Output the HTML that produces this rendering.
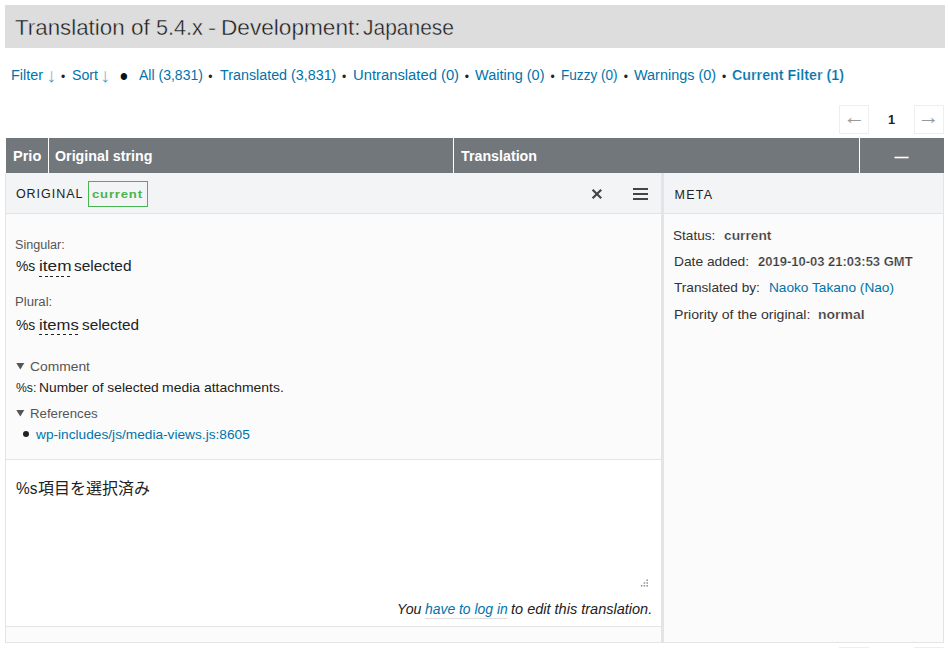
<!DOCTYPE html>
<html lang="en">
<head>
<meta charset="utf-8">
<title>Translation of 5.4.x - Development: Japanese</title>
<style>
*{box-sizing:border-box}
html,body{margin:0;padding:0;background:#fff}
body{width:948px;height:648px;overflow:hidden;position:relative;font-family:"Liberation Sans","Noto Sans CJK JP",sans-serif;color:#222;font-size:14px}
a{text-decoration:none}
h2{margin:0;font:inherit}
.abs{position:absolute;white-space:nowrap}
.t{position:absolute;white-space:nowrap;line-height:1;transform-origin:0 0;font-weight:400;font-style:normal}
.sp{font-size:12px;color:#222}
.pg{position:absolute;border:1px solid #eee;width:30px;height:29px;top:105px;background:#fff}
#thead{left:6px;top:138px;width:938px;height:35px;background:#72777c}
#thead i{position:absolute;top:0;width:1px;height:35px;background:#fff}
.ph{position:absolute;top:173px;height:40px;background:#f3f4f5}
.hl{position:absolute;height:1px;background:#e2e4e7}
</style>
</head>
<body>
<div class="abs" style="left:5px;top:5px;width:940px;height:43px;background:#ddd"></div>

<!-- filter row decorations -->

<!-- paging -->
<div class="pg" style="left:839px"></div>
<div class="pg" style="left:914px"></div>

<!-- table head -->
<div id="thead" class="abs"><i style="left:42px"></i><i style="left:447px"></i><i style="left:853px"></i></div>

<!-- editor panel -->
<div class="abs" style="left:5px;top:173px;width:939px;height:470px;border:1px solid #e2e4e7;border-top:0;background:#fbfbfb"></div>
<div class="ph" style="left:6px;width:655px"></div>
<div class="ph" style="left:664px;width:279px"></div>
<div class="hl" style="left:6px;top:213px;width:937px"></div>
<div class="abs" style="left:88px;top:181px;width:60px;height:26px;border:1px solid #46b450"></div>
<svg class="abs" style="left:591px;top:188px" width="12" height="12" viewBox="0 0 12 12"><path d="M1.6 1.8L10.2 10.2M10.2 1.8L1.6 10.2" stroke="#444" stroke-width="2.2" fill="none"/></svg>
<svg class="abs" style="left:633px;top:188px" width="15" height="12" viewBox="0 0 15 12"><path d="M0 1H15M0 6H15M0 11H15" stroke="#444" stroke-width="2" fill="none"/></svg>

<i class="abs" style="left:39px;top:276px;width:31px;height:1px;background:repeating-linear-gradient(to right,#222 0,#222 3px,transparent 3px,transparent 5.6px)"></i>
<i class="abs" style="left:39px;top:334px;width:39px;height:1px;background:repeating-linear-gradient(to right,#222 0,#222 3px,transparent 3px,transparent 6px)"></i>
<svg class="abs" style="left:16px;top:363px" width="9" height="7" viewBox="0 0 9 7"><path d="M0.3 0H8.3L4.3 6.6Z" fill="#555"/></svg>
<svg class="abs" style="left:16px;top:410px" width="9" height="7" viewBox="0 0 9 7"><path d="M0.3 0H8.3L4.3 6.6Z" fill="#555"/></svg>
<i class="abs" style="left:23.1px;top:431.1px;width:6.3px;height:6.3px;border-radius:50%;background:#222"></i>

<!-- textarea -->
<div class="abs" style="left:6px;top:459px;width:655px;height:168px;background:#fff;border-top:1px solid #e2e4e7;border-bottom:1px solid #e2e4e7"></div>
<span class="t" id="jp" style="left:38px;top:481px;font-size:16px;color:#222">項目を選択済み</span>
<svg class="abs" style="left:640px;top:579px" width="9" height="9" viewBox="0 0 9 9"><g fill="#999"><rect x="6.4" y="0.4" width="1.6" height="1.6"/><rect x="3.6" y="3.2" width="1.6" height="1.6"/><rect x="6.4" y="3.2" width="1.6" height="1.6"/><rect x="0.8" y="6" width="1.6" height="1.6"/><rect x="3.6" y="6" width="1.6" height="1.6"/><rect x="6.4" y="6" width="1.6" height="1.6"/></g></svg>
<i class="abs" style="left:425px;top:618px;width:82px;height:1px;background:#ddd"></i>

<!-- divider -->
<div class="abs" style="left:661px;top:173px;width:3px;height:469px;background:#e2e4e7"></div>

<!-- text items -->
<a href="#" class="t" id="ar1" style="left:46.3px;top:65.4px;font-size:20px;color:#0073aa;-webkit-text-stroke:0.35px #fff">↓</a>
<a href="#" class="t" id="ar2" style="left:100.1px;top:65.4px;font-size:20px;color:#0073aa;-webkit-text-stroke:0.35px #fff">↓</a>
<span class="t" id="ar3" style="left:843.4px;top:106px;font-size:22px;color:#999">←</span>
<span class="t" id="ar4" style="left:917.6px;top:106px;font-size:22px;color:#999">→</span>
<b class="t" id="dash" style="left:894.5px;top:150px;font-size:14px;font-weight:700;color:#fff">—</b>
<span class="t sp" id="sp0" style="left:61.1px;top:71.2px">•</span>
<span class="t sp" id="sp1" style="left:208.3px;top:71.2px">•</span>
<span class="t sp" id="sp2" style="left:342.0px;top:71.2px">•</span>
<span class="t sp" id="sp3" style="left:464.7px;top:71.2px">•</span>
<span class="t sp" id="sp4" style="left:550.4px;top:71.2px">•</span>
<span class="t sp" id="sp5" style="left:623.7px;top:71.2px">•</span>
<span class="t sp" id="sp6" style="left:722.0px;top:71.2px">•</span>
<strong class="t" id="spb" style="left:119.7px;top:63.9px;font-size:23.5px;color:#111;transform:scaleY(1.1)">•</strong>
<h2><span class="t" id="t1" style="left:14.84px;top:16.00px;font-size:22.8px;letter-spacing:0.000px;transform:scaleX(0.9791);color:#1c1c1c;-webkit-text-stroke:0.42px #ddd">Translation</span>
<span class="t" id="t2" style="left:130.68px;top:16.00px;font-size:22.8px;letter-spacing:0.000px;transform:scaleX(0.9871);color:#1c1c1c;-webkit-text-stroke:0.42px #ddd">of</span>
<span class="t" id="t3" style="left:156.06px;top:16.00px;font-size:22.8px;letter-spacing:0.000px;transform:scaleX(0.9474);color:#1c1c1c;-webkit-text-stroke:0.42px #ddd">5.4.x</span>
<span class="t" id="t4" style="left:208.28px;top:16.00px;font-size:22.8px;letter-spacing:0.000px;transform:scaleX(1.0731);color:#1c1c1c;-webkit-text-stroke:0.42px #ddd">-</span>
<span class="t" id="t5" style="left:220.81px;top:16.00px;font-size:22.8px;letter-spacing:0.000px;transform:scaleX(0.9925);color:#1c1c1c;-webkit-text-stroke:0.42px #ddd">Development:</span>
<span class="t" id="t6" style="left:363.47px;top:16.00px;font-size:22.8px;letter-spacing:0.000px;transform:scaleX(0.9205);color:#1c1c1c;-webkit-text-stroke:0.42px #ddd">Japanese</span></h2>
<a href="#" class="t" id="f1" style="left:11.41px;top:68.00px;font-size:14px;letter-spacing:0.000px;transform:scaleX(1.0301);color:#0073aa">Filter</a>
<a href="#" class="t" id="f2" style="left:71.58px;top:68.00px;font-size:14px;letter-spacing:0.000px;transform:scaleX(1.0110);color:#0073aa">Sort</a>
<a href="#" class="t" id="f3" style="left:139.32px;top:68.00px;font-size:14px;letter-spacing:0.000px;transform:scaleX(1.0023);color:#0073aa">All (3,831)</a>
<a href="#" class="t" id="f4" style="left:219.50px;top:68.00px;font-size:14px;letter-spacing:0.000px;transform:scaleX(1.0221);color:#0073aa">Translated (3,831)</a>
<a href="#" class="t" id="f5" style="left:352.57px;top:68.00px;font-size:14px;letter-spacing:0.000px;transform:scaleX(1.0565);color:#0073aa">Untranslated (0)</a>
<a href="#" class="t" id="f6" style="left:475.49px;top:68.00px;font-size:14px;letter-spacing:0.000px;transform:scaleX(1.0349);color:#0073aa">Waiting (0)</a>
<a href="#" class="t" id="f7" style="left:560.65px;top:68.00px;font-size:14px;letter-spacing:0.000px;transform:scaleX(0.9705);color:#0073aa">Fuzzy (0)</a>
<a href="#" class="t" id="f8" style="left:634.49px;top:68.00px;font-size:14px;letter-spacing:0.000px;transform:scaleX(1.0311);color:#0073aa">Warnings (0)</a>
<a href="#" class="t" id="f9" style="left:732.30px;top:68.00px;font-size:14px;letter-spacing:0.000px;transform:scaleX(1.0202);font-weight:700;-webkit-text-stroke:0.22px #fff;color:#0073aa">Current Filter (1)</a>
<b class="t" id="p1" style="left:887.73px;top:114.00px;font-size:12.8px;letter-spacing:0.000px;transform:scaleX(0.9938);font-weight:700;color:#222">1</b>
<b class="t" id="h1" style="left:12.66px;top:149.00px;font-size:14px;letter-spacing:0.000px;transform:scaleX(1.0389);font-weight:700;color:#fff">Prio</b>
<b class="t" id="h2" style="left:55.38px;top:149.00px;font-size:14px;letter-spacing:0.000px;transform:scaleX(1.0180);font-weight:700;color:#fff">Original string</b>
<b class="t" id="h3" style="left:460.72px;top:149.00px;font-size:14px;letter-spacing:0.000px;transform:scaleX(1.0181);font-weight:700;color:#fff">Translation</b>
<span class="t" id="o1" style="left:15.91px;top:188.00px;font-size:12.5px;letter-spacing:0.981px;transform:scaleX(1.0000);color:#222">ORIGINAL</span>
<b class="t" id="o2" style="left:92.35px;top:188.00px;font-size:11.6px;letter-spacing:0.718px;transform:scaleX(1.1300);font-weight:700;color:#46b450">current</b>
<span class="t" id="m0" style="left:674.47px;top:189.00px;font-size:12.5px;letter-spacing:1.266px;transform:scaleX(1.0000);color:#222">META</span>
<span class="t" id="s1" style="left:15.07px;top:239.00px;font-size:12px;letter-spacing:0.000px;transform:scaleX(1.0490);color:#555">Singular:</span>
<span class="t" id="s2" style="left:15.83px;top:258.00px;font-size:15px;letter-spacing:0.000px;transform:scaleX(0.9251);color:#222">%s</span>
<span class="t" id="s3" style="left:38.61px;top:258.00px;font-size:15px;letter-spacing:0.000px;transform:scaleX(1.1482);color:#222">item</span>
<span class="t" id="s4" style="left:74.36px;top:258.00px;font-size:15px;letter-spacing:0.000px;transform:scaleX(1.0290);color:#222">selected</span>
<span class="t" id="s5" style="left:14.93px;top:296.00px;font-size:12px;letter-spacing:0.000px;transform:scaleX(1.0947);color:#555">Plural:</span>
<span class="t" id="s6" style="left:15.83px;top:317.00px;font-size:15px;letter-spacing:0.000px;transform:scaleX(0.9251);color:#222">%s</span>
<span class="t" id="s7" style="left:38.74px;top:317.00px;font-size:15px;letter-spacing:0.000px;transform:scaleX(1.1100);color:#222">items</span>
<span class="t" id="s8" style="left:81.84px;top:317.00px;font-size:15px;letter-spacing:0.000px;transform:scaleX(1.0199);color:#222">selected</span>
<span class="t" id="c1" style="left:29.60px;top:360.00px;font-size:13px;letter-spacing:0.000px;transform:scaleX(1.0639);color:#555">Comment</span>
<span class="t" id="c2a" style="left:16.42px;top:382.00px;font-size:12.8px;letter-spacing:0.000px;transform:scaleX(0.9530);color:#222">%s:</span>
<span class="t" id="c2b" style="left:38.68px;top:382.00px;font-size:12.8px;letter-spacing:0.000px;transform:scaleX(1.0791);color:#222">Number of selected</span>
<span class="t" id="c2c" style="left:162.19px;top:382.00px;font-size:12.8px;letter-spacing:0.000px;transform:scaleX(1.0907);color:#222">media attachments.</span>
<span class="t" id="c3" style="left:29.86px;top:407.00px;font-size:13px;letter-spacing:0.000px;transform:scaleX(1.0175);color:#555">References</span>
<a href="#" class="t" id="c4" style="left:35.57px;top:429.00px;font-size:12.8px;letter-spacing:0.000px;transform:scaleX(1.0697);color:#0073aa">wp-includes/js/media-views.js:8605</a>
<span class="t" id="x1" style="left:16.24px;top:481.00px;font-size:16px;letter-spacing:0.000px;transform:scaleX(0.9648);color:#222">%s</span>
<em class="t" id="n1" style="left:397.43px;top:602.00px;font-size:14px;letter-spacing:0.000px;transform:scaleX(1.0123);font-style:italic;color:#222">You</em>
<a href="#" class="t" id="n2" style="left:424.64px;top:602.00px;font-size:14px;letter-spacing:0.000px;transform:scaleX(0.9930);font-style:italic;color:#0073aa">have to log in</a>
<em class="t" id="n3" style="left:510.62px;top:602.00px;font-size:14px;letter-spacing:0.000px;transform:scaleX(1.0369);font-style:italic;color:#222">to edit this translation.</em>
<span class="t" id="m1" style="left:673.34px;top:229.00px;font-size:13px;letter-spacing:0.000px;transform:scaleX(1.0443);color:#333">Status:</span>
<b class="t" id="m2" style="left:724.16px;top:229.00px;font-size:13px;letter-spacing:0.000px;transform:scaleX(1.0592);font-weight:700;-webkit-text-stroke:0.22px #fbfbfb;color:#3a3a3a">current</b>
<span class="t" id="m3" style="left:673.60px;top:255.00px;font-size:13px;letter-spacing:0.000px;transform:scaleX(1.0595);color:#333">Date added:</span>
<b class="t" id="m4" style="left:757.65px;top:255.00px;font-size:13px;letter-spacing:0.000px;transform:scaleX(0.9995);font-weight:700;-webkit-text-stroke:0.22px #fbfbfb;color:#3a3a3a">2019-10-03 21:03:53 GMT</b>
<span class="t" id="m5" style="left:673.63px;top:281.00px;font-size:13px;letter-spacing:0.000px;transform:scaleX(1.0489);color:#333">Translated by:</span>
<a href="#" class="t" id="m6" style="left:769.22px;top:281.00px;font-size:13px;letter-spacing:0.000px;transform:scaleX(1.0503);color:#0073aa">Naoko Takano (Nao)</a>
<span class="t" id="m7" style="left:673.53px;top:308.00px;font-size:13px;letter-spacing:0.000px;transform:scaleX(1.0843);color:#333">Priority of the original:</span>
<b class="t" id="m8" style="left:817.71px;top:308.00px;font-size:13px;letter-spacing:0.000px;transform:scaleX(1.0742);font-weight:700;-webkit-text-stroke:0.22px #fbfbfb;color:#3a3a3a">normal</b>

<!-- bottom paging hint -->
<div class="abs" style="left:839px;top:647px;width:30px;height:10px;border:1px solid #eee"></div>
<div class="abs" style="left:914px;top:647px;width:30px;height:10px;border:1px solid #eee"></div>
</body>
</html>
